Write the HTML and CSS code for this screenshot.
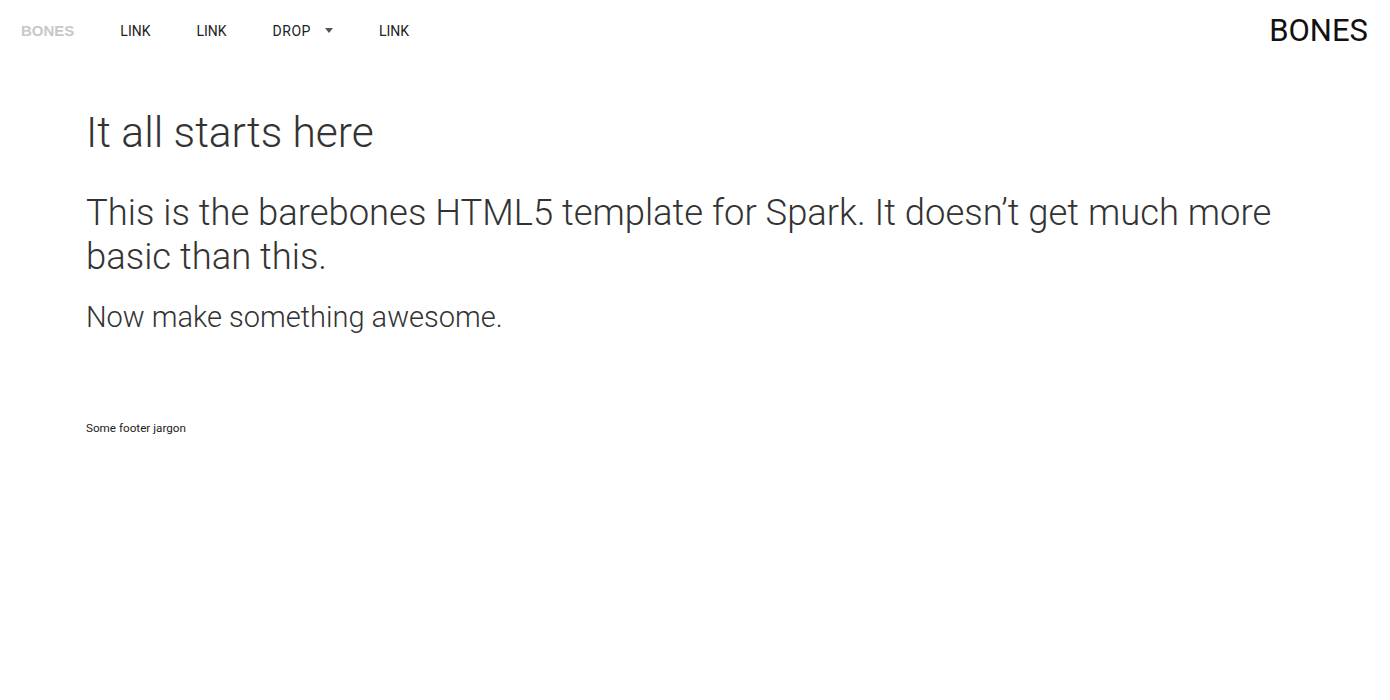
FILE: index.html
```html
<!DOCTYPE html>
<html lang="en">
<head>
<meta charset="utf-8">
<title>Bones</title>
<link rel="stylesheet" href="styles.css">
</head>
<body>
<header class="nav">
  <ul class="menu">
    <li class="brand">BONES</li>
    <li class="item">LINK</li>
    <li class="item">LINK</li>
    <li class="item drop">DROP <span class="caret"></span></li>
    <li class="item">LINK</li>
  </ul>
  <div class="logo">BONES</div>
</header>
<main class="content">
  <h1 class="title">It all starts here</h1>
  <p class="lead">This is the barebones HTML5 template for Spark. It doesn’t get much more basic than this.</p>
  <p class="sub">Now make something awesome.</p>
</main>
<footer class="footer">Some footer jargon</footer>
</body>
</html>
```
FILE: styles.css
```css
html, body { margin: 0; padding: 0; background: #fff; }
body { font-family: Roboto, "Liberation Sans", Arial, sans-serif; font-weight: 300; color: #333; }
.nav { display: flex; justify-content: space-between; align-items: center; height: 61px; padding: 0 22px 0 21px; }
.menu { display: flex; align-items: center; list-style: none; margin: 0; padding: 0; gap: 46px; }
.brand { font-weight: bold; color: #c8c8c8; font-size: 15px; font-family: "Liberation Sans", Arial, sans-serif; }
.item { font-size: 14px; color: #222; font-weight: 400; }
.drop { display: flex; align-items: center; gap: 14px; letter-spacing: 0.5px; }
.caret { width: 0; height: 0; border-left: 4.5px solid transparent; border-right: 4.5px solid transparent; border-top: 5px solid #555; }
.logo { font-size: 31px; color: #111; font-weight: 400; }
.content { padding: 0 86px; }
.title { font-weight: 300; font-size: 42.5px; margin: 46px 0 0; line-height: 52px; }
.lead { font-size: 36.4px; line-height: 44px; margin: 32px 0 0; }
.sub { font-size: 29px; line-height: 36px; margin: 20px 0 0; }
.footer { font-size: 11.7px; padding: 86px 86px 0; color: #222; font-weight: 400; }
```
